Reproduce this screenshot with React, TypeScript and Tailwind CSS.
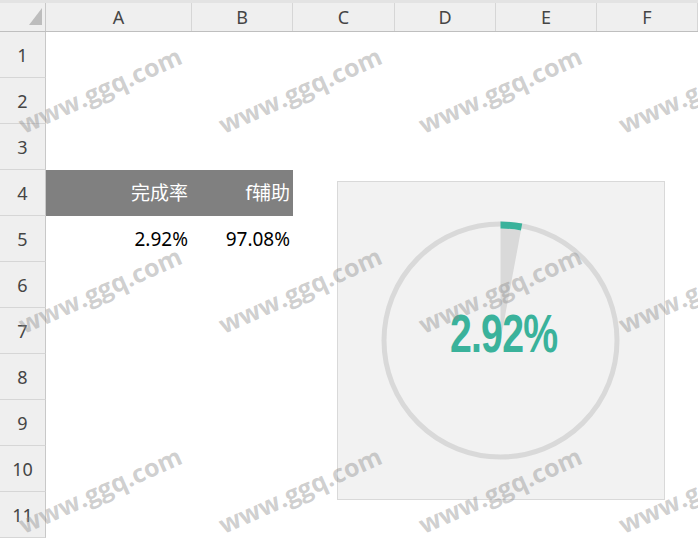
// @ts-nocheck
import React from "react";

const COLS = ["A", "B", "C", "D", "E", "F"];
const ROWS = [1, 2, 3, 4, 5, 6, 7, 8, 9, 10, 11];

// watermark centres, 200px apart
const MARKS = [];
for (const y of [90, 290, 490]) {
  for (const x of [100, 300, 500, 700]) MARKS.push({ x, y });
}

const RATE = 0.0292;

function Donut() {
  const cx = 162.5;
  const cy = 158.5;
  const r = 115.5;
  const a = RATE * Math.PI * 2;
  const ex = cx + r * Math.sin(a);
  const ey = cy - r * Math.cos(a);
  const wr = 112;
  const wx = cx + wr * Math.sin(a);
  const wy = cy - wr * Math.cos(a);

  return (
    <svg width="326" height="317" viewBox="0 0 326 317" className="block">
      <path d={`M${cx} ${cy} L${cx} ${cy - wr} A${wr} ${wr} 0 0 1 ${wx} ${wy} Z`} fill="#d9d9d9" />
      <circle cx={cx} cy={cy} r={116.5} fill="none" stroke="#d9d9d9" strokeWidth="5" />
      <path d={`M${cx} ${cy - r} A${r} ${r} 0 0 1 ${ex} ${ey}`} fill="none" stroke="#3ab29b" strokeWidth="7" />
    </svg>
  );
}

export default function App() {
  return (
    <div className="relative h-[539px] w-[698px] overflow-hidden bg-white font-['Noto_Sans','Noto_Sans_CJK_SC',sans-serif]">
      <div className="h-[3px] bg-[#e3e3e3]" />

      {/* column headers */}
      <div className="grid h-[29px] grid-cols-[46px_146px_101px_102px_101px_101px_101px] border-b border-[#bfbfbf] bg-[#efefef] text-[18px] text-[#454545]">
        <div className="relative border-r border-[#c8c8c8]">
          <svg width="46" height="28" className="absolute left-0 top-0">
            <polygon points="42,5 42,22 29,22" fill="#bdbdbd" />
          </svg>
        </div>
        {COLS.map((c) => (
          <div key={c} className="flex items-center justify-center border-r border-[#d6d6d6] leading-none">
            {c}
          </div>
        ))}
      </div>

      {/* body rows */}
      {ROWS.map((n) => (
        <div key={n} className="grid h-[46px] grid-cols-[46px_146px_101px_102px_101px_101px_101px] text-[19px] leading-none">
          <div className="flex items-center justify-center border-r border-b border-r-[#c8c8c8] border-b-[#d6d6d6] bg-[#efefef] text-[18px] text-[#454545]">
            {n}
          </div>
          {n === 4 && (
            <>
              <div className="flex items-center justify-end bg-[#808080] pr-[4px] text-white">完成率</div>
              <div className="flex items-center justify-end bg-[#808080] pr-[3px] text-white">f辅助</div>
            </>
          )}
          {n === 5 && (
            <>
              <div className="flex items-center justify-end pr-[4px] text-black">2.92%</div>
              <div className="flex items-center justify-end pr-[3px] text-black">97.08%</div>
            </>
          )}
        </div>
      ))}

      {/* floating chart */}
      <div className="absolute left-[337px] top-[181px] h-[319px] w-[328px] border border-[#d9d9d9] bg-[#f2f2f2]">
        <Donut />
        <div className="absolute inset-0 flex items-center justify-center pl-[6px] pb-[14px]">
          <span className="inline-block scale-x-[0.74] font-['Liberation_Sans',sans-serif] text-[53px] font-bold leading-none tracking-[-1px] text-[#3ab29b]">
            2.92%
          </span>
        </div>
      </div>

      {/* watermark */}
      {MARKS.map((m, i) => (
        <div
          key={i}
          className="pointer-events-none absolute -translate-x-1/2 -translate-y-1/2 -rotate-[24deg] whitespace-nowrap font-['Open_Sans',sans-serif] text-[25px] font-bold leading-none text-[rgba(140,140,140,0.42)]"
          style={{ left: m.x, top: m.y }}
        >
          www.ggq.com
        </div>
      ))}
    </div>
  );
}
